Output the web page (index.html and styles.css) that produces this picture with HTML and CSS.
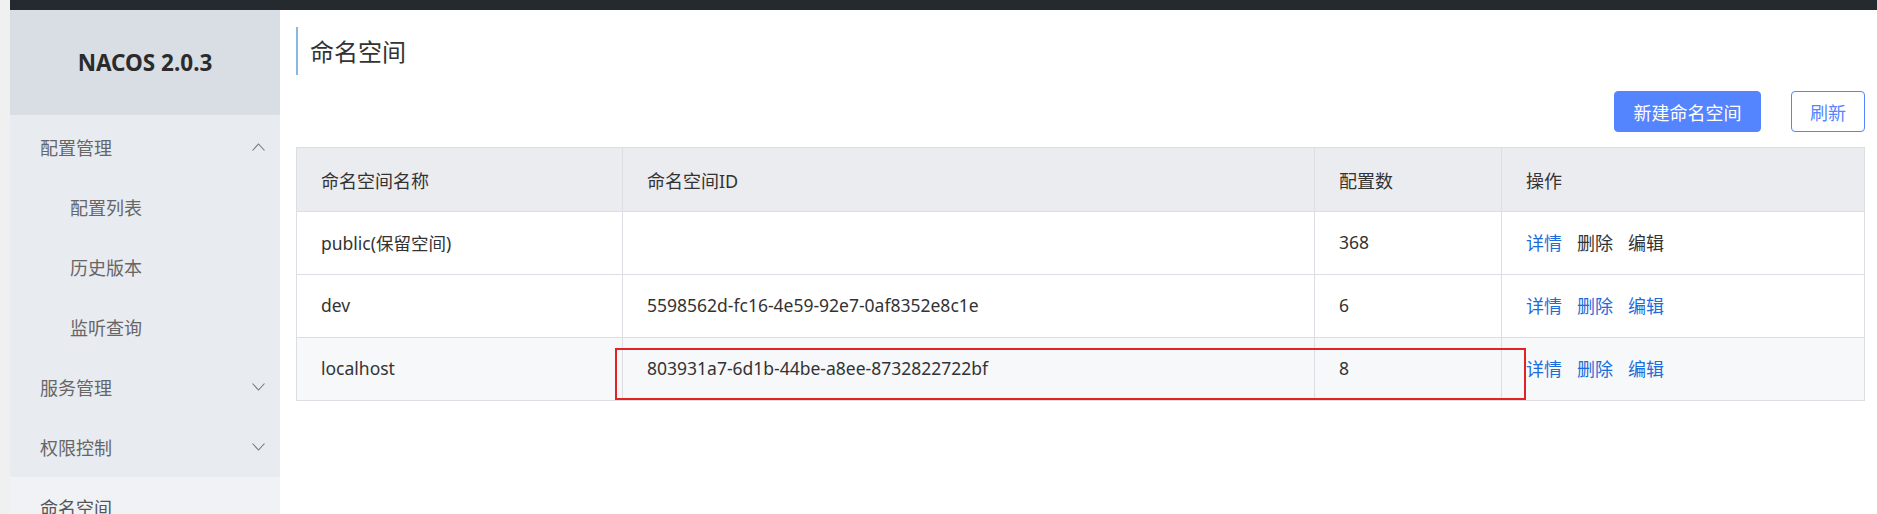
FILE: index.html
```html
<!DOCTYPE html>
<html lang="zh-CN">
<head>
<meta charset="utf-8">
<title>NACOS 2.0.3 - 命名空间</title>
<link rel="stylesheet" href="styles.css">
</head>
<body>
<div class="page">
  <div class="gutter"></div>
  <div class="app">
    <div class="topbar"></div>
    <div class="layout">
      <aside class="sidebar">
        <div class="logo">NACOS 2.0.3</div>
        <ul class="menu">
          <li class="menu-group"><span>配置管理</span>
            <svg class="chevron" width="13" height="8" viewBox="0 0 13 8"><polyline points="0.5,7.5 6.5,1 12.5,7.5" fill="none" stroke="#777" stroke-width="1.1"/></svg>
          </li>
          <li class="menu-sub">配置列表</li>
          <li class="menu-sub">历史版本</li>
          <li class="menu-sub">监听查询</li>
          <li class="menu-group"><span>服务管理</span>
            <svg class="chevron" width="13" height="8" viewBox="0 0 13 8"><polyline points="0.5,0.5 6.5,7 12.5,0.5" fill="none" stroke="#777" stroke-width="1.1"/></svg>
          </li>
          <li class="menu-group"><span>权限控制</span>
            <svg class="chevron" width="13" height="8" viewBox="0 0 13 8"><polyline points="0.5,0.5 6.5,7 12.5,0.5" fill="none" stroke="#777" stroke-width="1.1"/></svg>
          </li>
          <li class="menu-group active"><span>命名空间</span></li>
        </ul>
      </aside>
      <main class="main">
        <h1 class="page-title">命名空间</h1>
        <div class="toolbar">
          <button class="btn btn-primary">新建命名空间</button>
          <button class="btn btn-normal">刷新</button>
        </div>
        <div class="table-wrap">
          <table class="ns-table">
            <colgroup>
              <col class="c-name">
              <col class="c-id">
              <col class="c-count">
              <col class="c-op">
            </colgroup>
            <thead>
              <tr><th>命名空间名称</th><th>命名空间ID</th><th>配置数</th><th>操作</th></tr>
            </thead>
            <tbody>
              <tr>
                <td>public(保留空间)</td><td></td><td>368</td>
                <td><a class="link">详情</a><a class="link disabled">删除</a><a class="link disabled">编辑</a></td>
              </tr>
              <tr>
                <td>dev</td><td>5598562d-fc16-4e59-92e7-0af8352e8c1e</td><td>6</td>
                <td><a class="link">详情</a><a class="link">删除</a><a class="link">编辑</a></td>
              </tr>
              <tr class="hover">
                <td>localhost</td><td>803931a7-6d1b-44be-a8ee-8732822722bf</td><td>8</td>
                <td><a class="link">详情</a><a class="link">删除</a><a class="link">编辑</a></td>
              </tr>
            </tbody>
          </table>
          <div class="annotation"></div>
        </div>
      </main>
    </div>
  </div>
</div>
</body>
</html>
```

FILE: styles.css
```css
html, body {
  margin: 0;
  padding: 0;
  height: 100%;
  overflow: hidden;
}
body {
  font-family: "Noto Sans", "Noto Sans CJK SC", sans-serif;
  font-size: 17.5px;
  color: #333;
  background: #fff;
}
.page {
  display: flex;
  height: 100vh;
}
.gutter {
  width: 10px;
  flex: none;
  background: #f0f0f0;
}
.app {
  flex: 1;
  display: flex;
  flex-direction: column;
  min-width: 0;
}
.topbar {
  height: 10px;
  flex: none;
  background: #252a2f;
}
.layout {
  flex: 1;
  display: flex;
  min-height: 0;
}
.sidebar {
  width: 270px;
  flex: none;
  background: #e8ebf0;
  display: flex;
  flex-direction: column;
  overflow: hidden;
}
.logo {
  height: 105px;
  flex: none;
  background: #d9dde4;
  display: flex;
  align-items: center;
  justify-content: center;
  font-weight: 700;
  font-size: 22.5px;
  color: #2b2b2b;
}
.menu {
  list-style: none;
  margin: 0;
  padding: 2px 0 0;
  flex: 1;
  display: flex;
  flex-direction: column;
}
.menu li {
  height: 60px;
  flex: none;
  display: flex;
  align-items: center;
  color: #666;
  font-size: 18px;
  font-family: "Noto Sans CJK SC", sans-serif;
}
.menu-group {
  padding: 0 15px 0 30px;
  justify-content: space-between;
}
.menu-sub {
  padding-left: 60px;
}
.menu .active {
  background: #f0f2f5;
  flex: 1 0 auto;
  align-items: flex-start;
  padding-top: 17px;
  color: #555;
}
.chevron {
  display: block;
}
.main {
  flex: 1;
  min-width: 0;
  padding: 17px 12px 0 16px;
}
.page-title {
  margin: 0;
  height: 48px;
  line-height: 48px;
  border-left: 2px solid #88b7e0;
  padding-left: 12px;
  font-size: 24px;
  font-weight: 400;
  color: #333;
  font-family: "Noto Sans CJK SC", sans-serif;
}
.toolbar {
  margin-top: 16px;
  display: flex;
  justify-content: flex-end;
  gap: 30px;
  height: 41px;
}
.btn {
  font-family: "Noto Sans CJK SC", sans-serif;
  font-size: 18px;
  height: 41px;
  border-radius: 4px;
  padding: 0;
  cursor: pointer;
}
.btn-primary {
  background: #5584ff;
  border: 1px solid #5584ff;
  color: #fff;
  width: 147px;
}
.btn-normal {
  background: #fff;
  border: 1px solid #5584ff;
  color: #5584ff;
  width: 74px;
}
.table-wrap {
  position: relative;
  margin-top: 15px;
}
.ns-table {
  width: 100%;
  table-layout: fixed;
  border-collapse: separate;
  border-spacing: 0;
  border-top: 1px solid #dcdee3;
  border-left: 1px solid #dcdee3;
}
.c-name { width: 326px; }
.c-id { width: 692px; }
.c-count { width: 187px; }
.ns-table th,
.ns-table td {
  border-right: 1px solid #dcdee3;
  border-bottom: 1px solid #dcdee3;
  padding: 0 0 0 24px;
  text-align: left;
  vertical-align: middle;
  white-space: nowrap;
}
.ns-table th {
  height: 63px;
  background: #ebecf0;
  font-weight: 400;
  font-size: 18px;
  color: #333;
}
.ns-table td {
  height: 63px;
  padding-bottom: 2px;
  box-sizing: border-box;
  color: #333;
}
.ns-table tr.hover td {
  background: #f7f8fa;
}
.link {
  color: #1d6cd9;
  margin-right: 15px;
  font-size: 18px;
  font-family: "Noto Sans CJK SC", sans-serif;
}
.link.disabled {
  color: #333;
}
.annotation {
  position: absolute;
  left: 319px;
  top: 201px;
  width: 911px;
  height: 52px;
  box-sizing: border-box;
  border: 2px solid #e32323;
  pointer-events: none;
}
```
